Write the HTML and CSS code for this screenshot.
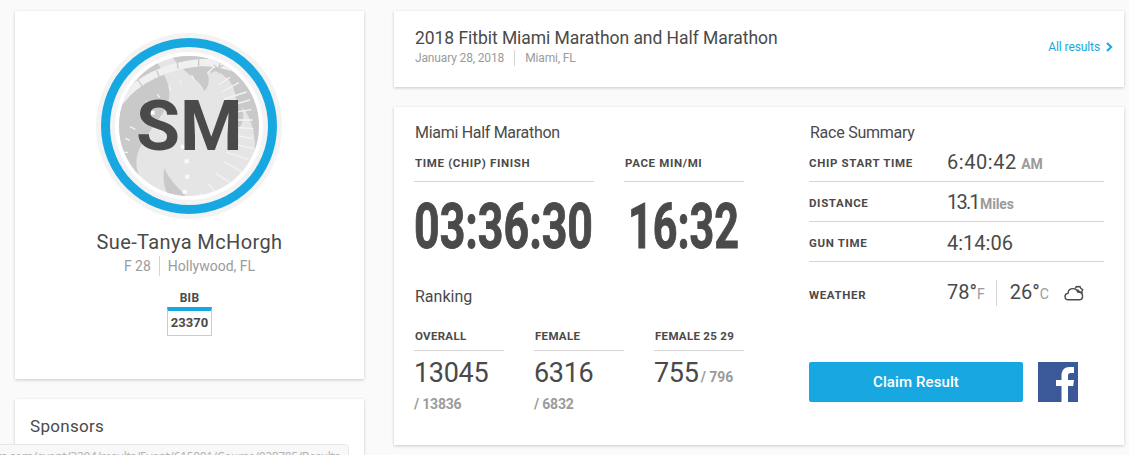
FILE: index.html
```html
<!DOCTYPE html>
<html lang="en">
<head>
  <meta charset="UTF-8">
  <meta name="viewport" content="width=device-width, initial-scale=1.0">
  <title>Sue-Tanya McHorgh - Race Results</title>
  <link rel="stylesheet" href="styles.css">
</head>
<body>
  <div class="page">
    <aside class="sidebar">
      <section class="card profile">
        <svg class="avatar" viewBox="18 9 558 558" role="img" aria-label="Profile picture">
          <defs>
            <clipPath id="face"><circle cx="297" cy="288" r="210"/></clipPath>
          </defs>
          <circle cx="297" cy="288" r="279" fill="#f3f3f3"/>
          <circle cx="297" cy="288" r="264" fill="#18a8e1"/>
          <circle cx="297" cy="288" r="237" fill="#f3f3f3"/>
          <circle cx="297" cy="288" r="222" fill="#fff"/>
          <g clip-path="url(#face)">
            <rect x="80" y="70" width="440" height="440" fill="#e5e5e5"/>
            <path fill="#c9c9c9" d="M80 70H192C206 120 240 140 238 200C230 260 150 320 140 385C136 420 148 445 170 470L80 500Z"/>
            <path fill="#c9c9c9" d="M240 70H520V340C512 355 500 370 490 385C505 340 485 255 455 232C470 270 445 310 430 300C450 240 440 160 405 140C385 118 365 122 352 130C362 155 352 178 342 183C335 150 275 130 240 70Z"/>
            <path fill="#c9c9c9" d="M223 414C235 445 265 475 290 500H240C220 480 218 440 223 414Z"/>
            <path d="M90 215C140 150 225 108 330 98C380 96 425 110 460 125" fill="none" stroke="#f0f0f0" stroke-width="22"/>
            <path d="M144 150L156 168M200 122L208 141M262 97L264 117M326 87V109M390 87L386 130M362 128L402 104M372 104L396 128" stroke="#c9c9c9" stroke-width="4"/>
            <path d="M343 98L362 84M352 130L375 108M385 165L420 142M396 186L446 158M402 207L470 186M410 230L480 210M414 250L484 239M416 270L488 270M416 291L490 296M416 312L488 326M412 338L490 356M408 366L474 388M402 396L458 426M378 430L430 465M355 462L382 494M330 490L340 500" stroke="#f3f3f3" stroke-width="4"/>
            <path d="M268 150L275 162M305 135L312 148M237 170L244 182M202 192L209 203M168 214L178 224M120 290L136 298M106 325L120 331M100 367L114 367" stroke="#f3f3f3" stroke-width="4"/>
            <path d="M272 344h12v12h-12zM284 388h12v12h-12zM286 434h12v12h-12zM278 479h12v12h-12zM182 242h12v12h-12z" fill="#fafafa"/>
          </g>
          <text class="initials" x="138" y="359" textLength="320" lengthAdjust="spacingAndGlyphs">SM</text>
        </svg>
        <h1 class="name">Sue-Tanya McHorgh</h1>
        <div class="meta"><span>F 28</span><span class="sep">Hollywood, FL</span></div>
        <div class="bib-label">BIB</div>
        <div class="bib">23370</div>
      </section>
      <section class="card sponsors">
        <h2>Sponsors</h2>
      </section>
    </aside>

    <main class="content">
      <section class="card event">
        <div>
          <h2 class="event-title">2018 Fitbit Miami Marathon and Half Marathon</h2>
          <div class="event-meta"><span>January 28, 2018</span><span class="sep">Miami, FL</span></div>
        </div>
        <a class="all-results" href="#">All results
          <svg width="7" height="10" viewBox="0 0 7 10"><path d="M1 1l4.200 4L1 9" fill="none" stroke="#18a8e1" stroke-width="2"/></svg>
        </a>
      </section>

      <section class="card results">
        <div class="race">
          <h2 class="race-title">Miami Half Marathon</h2>
          <div class="times">
            <div class="time finish">
              <h3>Time (Chip) Finish</h3>
              <svg class="clock" width="180" height="60"><text x="0" y="55.500" textLength="179" lengthAdjust="spacingAndGlyphs">03:36:30</text></svg>
            </div>
            <div class="time pace">
              <h3>Pace min/mi</h3>
              <svg class="clock" width="120" height="60"><text x="4" y="55.500" textLength="111" lengthAdjust="spacingAndGlyphs">16:32</text></svg>
            </div>
          </div>
          <h2>Ranking</h2>
          <div class="ranks">
            <div class="rank"><h3>Overall</h3><b>13045</b><small>/ 13836</small></div>
            <div class="rank"><h3>Female</h3><b>6316</b><small>/ 6832</small></div>
            <div class="rank last"><h3>Female 25 29</h3><b>755</b><small>/ 796</small></div>
          </div>
        </div>

        <div class="summary">
          <h2>Race Summary</h2>
          <div class="row"><h3>Chip Start Time</h3><p class="chip">6:40:42 <small>AM</small></p></div>
          <div class="row"><h3>Distance</h3><p class="miles">13.1 <small>Miles</small></p></div>
          <div class="row"><h3>Gun Time</h3><p>4:14:06</p></div>
          <div class="row weather">
            <h3>Weather</h3>
            <p>78°<i>F</i></p>
            <p class="celsius">26°<i>C</i></p>
            <svg class="cloud" width="20" height="16" viewBox="0 0 20 16" fill="none" stroke="#4a4a4a" stroke-width="1.400">
              <path d="M4.500 14.800C2.500 14.800 1 13.400 1 11.500C1 9.700 2.300 8.500 4 8.400C4.200 5.500 6.200 3.600 9 3.600C11.300 3.600 13.100 4.900 13.700 7C16.400 6.600 18.600 8.400 18.600 11C18.600 13.200 17 14.800 15 14.800Z"/>
              <path d="M11.200 3.400L12.500 1.500L14.500 1.800L16 1.500L16.800 3.400L18.700 4.800L17.800 6.500L18.200 8.200M13.500 4.500C13.800 6 15 6.800 16.500 6.800"/>
            </svg>
          </div>
          <div class="actions">
            <a class="claim" href="#">Claim Result</a>
            <a class="facebook" href="#" aria-label="Facebook">
              <svg width="40" height="40" viewBox="0 0 40 40"><rect width="40" height="40" fill="#3b5998"/><path fill="#fff" d="M23.500 40V24H18v-6h5.500v-4.500C23.500 8.200 26.500 5 31.500 5H36v6h-3c-2.300 0-3 1.200-3 3v4h6l-.8 6H30v16z"/></svg>
            </a>
          </div>
        </div>
      </section>
    </main>
  </div>
  <div class="statusbar">rs.com/event/3294/results/Event/615881/Course/928785/Results</div>
</body>
</html>
```
FILE: styles.css
```css
* {
  box-sizing: border-box;
}
body {
  margin: 0;
  height: 455px;
  overflow: hidden;
  background: #fafafa;
  color: #4a4a4a;
  font-family: Roboto, "Liberation Sans", sans-serif;
}
h1, h2, h3, p {
  margin: 0;
  font-weight: 400;
}
a {
  text-decoration: none;
}
h2 {
  font-size: 16px;
  line-height: 20px;
}
h3 {
  font-size: 11.5px;
  line-height: 16px;
  font-weight: 700;
  text-transform: uppercase;
  letter-spacing: .65px;
  white-space: nowrap;
}
small {
  font-size: 14px;
  font-weight: 700;
  color: #9b9b9b;
}
.page {
  display: flex;
  gap: 30px;
  height: 455px;
  padding: 11px 5px 0 15px;
  overflow: hidden;
}
.sidebar {
  width: 349px;
}
.content {
  width: 730px;
}
.card {
  background: #fff;
  box-shadow: 0 1px 3px rgba(0, 0, 0, .2);
  margin-bottom: 20px;
}
.profile {
  height: 368px;
  padding-top: 22px;
  display: flex;
  flex-direction: column;
  align-items: center;
}
.avatar {
  width: 186px;
  height: 186px;
  margin-right: 1px;
}
.initials {
  font-size: 212px;
  font-weight: 700;
  fill: #4a4a4a;
}
.name {
  font-size: 20px;
  line-height: 24px;
  letter-spacing: .38px;
  margin-top: 11px;
}
.meta {
  display: flex;
  font-size: 14px;
  line-height: 20px;
  color: #9b9b9b;
  margin-top: 2px;
}
.sep {
  border-left: 1px solid #d5d5d5;
  margin-left: 8px;
  padding-left: 8px;
}
.bib-label {
  font-size: 12px;
  font-weight: 700;
  line-height: 14px;
  letter-spacing: .3px;
  margin-top: 15px;
}
.bib {
  width: 45px;
  height: 29px;
  margin-top: 2px;
  border: 1px solid #ccc;
  border-top: 4px solid #18a8e1;
  font-size: 13px;
  font-weight: 700;
  line-height: 24px;
  text-align: center;
}
.sponsors {
  height: 56px;
  padding: 17px 15px 0;
}
.sponsors h2 {
  font-size: 17px;
  letter-spacing: .3px;
}
.event {
  height: 76px;
  padding: 17px 11px 0 21px;
  display: flex;
  justify-content: space-between;
}
.event-title {
  font-size: 17.5px;
  letter-spacing: -.05px;
}
.event-meta {
  display: flex;
  font-size: 12px;
  line-height: 16px;
  letter-spacing: -.15px;
  color: #9b9b9b;
  margin-top: 2px;
}
.event-meta .sep {
  margin-left: 10px;
  padding-left: 10px;
}
.all-results {
  display: flex;
  gap: 6px;
  align-items: center;
  height: 16px;
  margin-top: 11px;
  font-size: 12px;
  letter-spacing: -.1px;
  color: #18a8e1;
}
.results {
  height: 338px;
  padding: 16px 20px 0;
  display: flex;
  gap: 65px;
}
.race {
  width: 330px;
}
.race h2, .summary h2 {
  padding-left: 1px;
}
.race .race-title {
  letter-spacing: -.3px;
}
.times {
  display: flex;
  gap: 30px;
  margin-top: 12px;
  margin-bottom: 35px;
}
.finish {
  width: 180px;
}
.pace {
  width: 120px;
}
.time h3 {
  padding: 0 0 10px 1px;
  border-bottom: 1px solid #d5d5d5;
}
.clock {
  display: block;
  margin-top: 10px;
  overflow: visible;
}
.clock text {
  font-size: 63px;
  font-weight: 700;
  fill: #4a4a4a;
  stroke: #4a4a4a;
  stroke-width: 1px;
}
.ranks {
  display: flex;
  gap: 30px;
  margin-top: 21px;
}
.rank {
  width: 90px;
  white-space: nowrap;
}
.rank h3 {
  padding: 0 0 6px 1px;
  letter-spacing: .3px;
  border-bottom: 1px solid #d5d5d5;
}
.rank b {
  display: block;
  font-size: 27px;
  font-weight: 400;
  line-height: 32px;
  letter-spacing: -.3px;
  margin-top: 6px;
}
.rank small {
  display: block;
  line-height: 18px;
  letter-spacing: -.2px;
  margin-top: 6px;
}
.rank.last b, .rank.last small {
  display: inline-block;
}
.rank.last small {
  margin-left: 2px;
  letter-spacing: 0;
}
.summary {
  width: 295px;
}
.summary h2 {
  letter-spacing: -.25px;
}
.row {
  display: flex;
  align-items: center;
  height: 40px;
  padding-top: 2px;
  border-bottom: 1px solid #d5d5d5;
}
.summary h2 + .row {
  height: 39px;
}
.row h3 {
  width: 138px;
}
.row p {
  font-size: 20px;
  line-height: 24px;
}
.row .chip {
  letter-spacing: .55px;
}
.row .miles {
  letter-spacing: -1.8px;
}
.chip small, .miles small {
  letter-spacing: -.1px;
}
.chip small {
  margin-left: -1px;
}
.miles small {
  margin-left: -2px;
}
.row i {
  font-size: 14px;
  font-style: normal;
  color: #9b9b9b;
}
.row.weather {
  height: 60px;
  border: 0;
}
.weather h3 {
  padding-top: 4px;
}
.celsius {
  border-left: 1px solid #d5d5d5;
  margin-left: 11px;
  padding-left: 13px;
}
.cloud {
  margin-left: 15px;
}
.actions {
  display: flex;
  gap: 15px;
  margin-top: 40px;
}
.claim {
  width: 214px;
  height: 40px;
  line-height: 40px;
  text-align: center;
  border-radius: 2px;
  background: #18a8e1;
  color: #fff;
  font-size: 15px;
  font-weight: 500;
  letter-spacing: .1px;
}
.facebook svg {
  display: block;
}
/* browser link preview over the page */
.statusbar {
  position: absolute;
  left: -1px;
  top: 444px;
  width: 350px;
  height: 22px;
  padding-right: 8px;
  border: 1px solid #e8e8e8;
  border-radius: 0 4px 0 0;
  background: rgba(248, 248, 248, .93);
  color: #b4b4b4;
  font: 12px/23px "Noto Sans", sans-serif;
  letter-spacing: -.35px;
  display: flex;
  justify-content: flex-end;
  white-space: nowrap;
  overflow: hidden;
}
```
